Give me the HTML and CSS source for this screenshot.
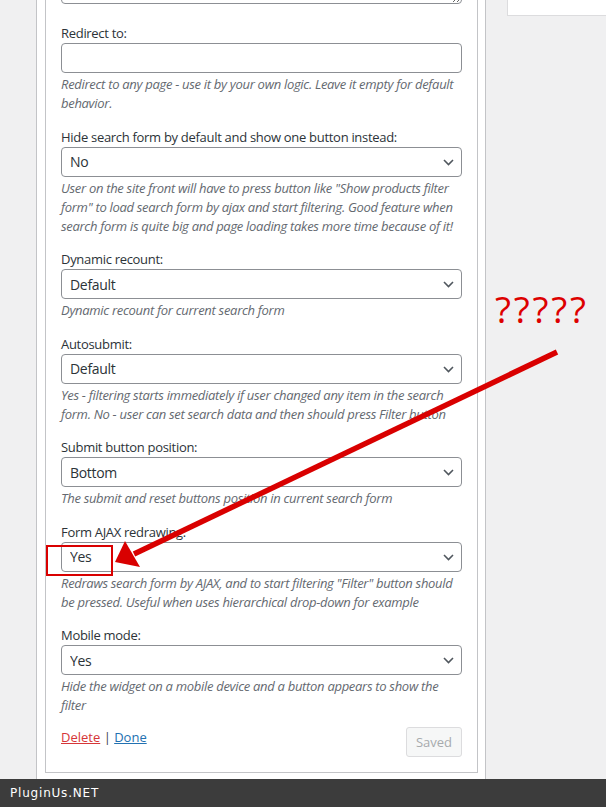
FILE: index.html
```html
<!DOCTYPE html>
<html lang="en">
<head>
	<meta charset="UTF-8"/>
	<meta name="viewport" content="width=device-width, initial-scale=1.0"/>
	<title>Widget settings</title>
	<link rel="stylesheet" href="styles.css">
</head>
<body>
	<div class="page">
		<div class="side"></div>

		<div class="widget">
			<div class="widget-inside">

				<div class="field field-top">
					<textarea></textarea>
				</div>

				<div class="field">
					<label>Redirect to:</label>
					<input class="input" type="text">
					<p class="desc">Redirect to any page - use it by your own logic. Leave it empty for default behavior.</p>
				</div>

				<div class="field">
					<label>Hide search form by default and show one button instead:</label>
					<div class="select-wrap">
						<select class="select"><option>No</option></select>
						<svg class="chevron" viewBox="0 0 11 7"><path d="M1 1l4.5 4.5L10 1"/></svg>
					</div>
					<p class="desc">User on the site front will have to press button like "Show products filter form" to load search form by ajax and start filtering. Good feature when search form is quite big and page loading takes more time because of it!</p>
				</div>

				<div class="field">
					<label>Dynamic recount:</label>
					<div class="select-wrap">
						<select class="select"><option>Default</option></select>
						<svg class="chevron" viewBox="0 0 11 7"><path d="M1 1l4.5 4.5L10 1"/></svg>
					</div>
					<p class="desc">Dynamic recount for current search form</p>
				</div>

				<div class="field">
					<label>Autosubmit:</label>
					<div class="select-wrap">
						<select class="select"><option>Default</option></select>
						<svg class="chevron" viewBox="0 0 11 7"><path d="M1 1l4.5 4.5L10 1"/></svg>
					</div>
					<p class="desc">Yes - filtering starts immediately if user changed any item in the search form. No - user can set search data and then should press Filter button</p>
				</div>

				<div class="field">
					<label>Submit button position:</label>
					<div class="select-wrap">
						<select class="select"><option>Bottom</option></select>
						<svg class="chevron" viewBox="0 0 11 7"><path d="M1 1l4.5 4.5L10 1"/></svg>
					</div>
					<p class="desc">The submit and reset buttons position in current search form</p>
				</div>

				<div class="field">
					<label>Form AJAX redrawing:</label>
					<div class="select-wrap">
						<select class="select"><option>Yes</option></select>
						<svg class="chevron" viewBox="0 0 11 7"><path d="M1 1l4.5 4.5L10 1"/></svg>
					</div>
					<p class="desc">Redraws search form by AJAX, and to start filtering "Filter" button should be pressed. Useful when uses hierarchical drop-down for example</p>
				</div>

				<div class="field field-last">
					<label>Mobile mode:</label>
					<div class="select-wrap">
						<select class="select"><option>Yes</option></select>
						<svg class="chevron" viewBox="0 0 11 7"><path d="M1 1l4.5 4.5L10 1"/></svg>
					</div>
					<p class="desc">Hide the widget on a mobile device and a button appears to show the filter</p>
				</div>

				<div class="actions">
					<p class="links"><a class="delete" href="#">Delete</a> | <a class="done" href="#">Done</a></p>
					<button class="saved" disabled>Saved</button>
				</div>

			</div>
		</div>

		<div class="aside">
			<div class="aside-box"></div>
		</div>
	</div>

	<footer class="brand">PluginUs.NET</footer>

	<div class="question">?????</div>
	<svg class="annotation" viewBox="0 0 606 807">
		<rect x="47" y="546" width="65" height="29" fill="none" stroke="#d90000" stroke-width="2"/>
		<line x1="557" y1="352" x2="134" y2="554" stroke="#d90000" stroke-width="5.5"/>
		<polygon points="115,562 125,541 140,567" fill="#d90000"/>
	</svg>
</body>
</html>
```

FILE: styles.css
```css
*{
	box-sizing: border-box;
}
body{
	margin: 0;
	background: #f0f0f1;
	font-family: "Open Sans", sans-serif;
	font-size: 13px;
	color: #2c3338;
	overflow: hidden;
}
.page{
	display: flex;
	height: 779px;
}
.side{
	width: 36px;
}
.widget{
	width: 450px;
	background: #fff;
	border-left: 1px solid #c3c4c7;
	border-right: 1px solid #c3c4c7;
	padding: 0 7px 6px 8px;
}
.widget-inside{
	border: 1px solid #c3c4c7;
	margin-top: -70px;
	padding: 9px 15px 15px;
}
.aside{
	flex: 1;
	padding-left: 21px;
}
.aside-box{
	height: 16px;
	background: #fff;
	border-left: 1px solid #dcdcde;
	border-bottom: 1px solid #dcdcde;
}

/* fields */
.field{
	margin-bottom: 13.5px;
}
.field-top{
	margin-bottom: 19px;
}
.field-last{
	margin-bottom: 12px;
}
textarea{
	display: block;
	width: 100%;
	height: 64px;
	border: 1px solid #8c8f94;
	border-radius: 4px;
	margin: 0;
}
label{
	display: block;
	line-height: 20px;
	letter-spacing: -0.3px;
}
.input, .select{
	display: block;
	width: 100%;
	height: 30px;
	margin: 0;
	padding: 0 8px;
	border: 1px solid #8c8f94;
	border-radius: 4px;
	background: #fff;
	font-family: "Open Sans", sans-serif;
	font-size: 14px;
	letter-spacing: -0.3px;
	color: #2c3338;
	-webkit-appearance: none;
	appearance: none;
}
.select-wrap{
	position: relative;
}
.chevron{
	position: absolute;
	right: 8px;
	top: 12px;
	width: 11px;
	height: 7px;
	fill: none;
	stroke: #50575e;
	stroke-width: 1.6;
}
.desc{
	margin: 2px 0 0;
	font-style: italic;
	line-height: 19px;
	letter-spacing: -0.3px;
	color: #646970;
}

/* bottom row */
.actions{
	display: flex;
	justify-content: space-between;
	align-items: flex-start;
}
.links{
	margin: 0;
	line-height: 20px;
	color: #3c434a;
}
.delete{
	color: #d63638;
}
.done{
	color: #2271b1;
}
.saved{
	height: 30px;
	padding: 0 9px;
	background: #f6f7f7;
	border: 1px solid #dcdcde;
	border-radius: 3px;
	font-family: "Open Sans", sans-serif;
	font-size: 13px;
	color: #a7aaad;
}

/* screenshot overlays */
.brand{
	position: fixed;
	left: 0;
	right: 0;
	bottom: 0;
	height: 28px;
	padding-left: 10px;
	background: #3c3c3c;
	color: #fff;
	font-family: "DejaVu Sans", sans-serif;
	font-size: 12px;
	line-height: 28px;
	letter-spacing: .8px;
}
.question{
	position: absolute;
	left: 495px;
	top: 290px;
	font-size: 37px;
	line-height: 1;
	letter-spacing: 2.8px;
	color: #dd0000;
}
.annotation{
	position: absolute;
	top: 0;
	left: 0;
	width: 606px;
	height: 807px;
	pointer-events: none;
}
```
